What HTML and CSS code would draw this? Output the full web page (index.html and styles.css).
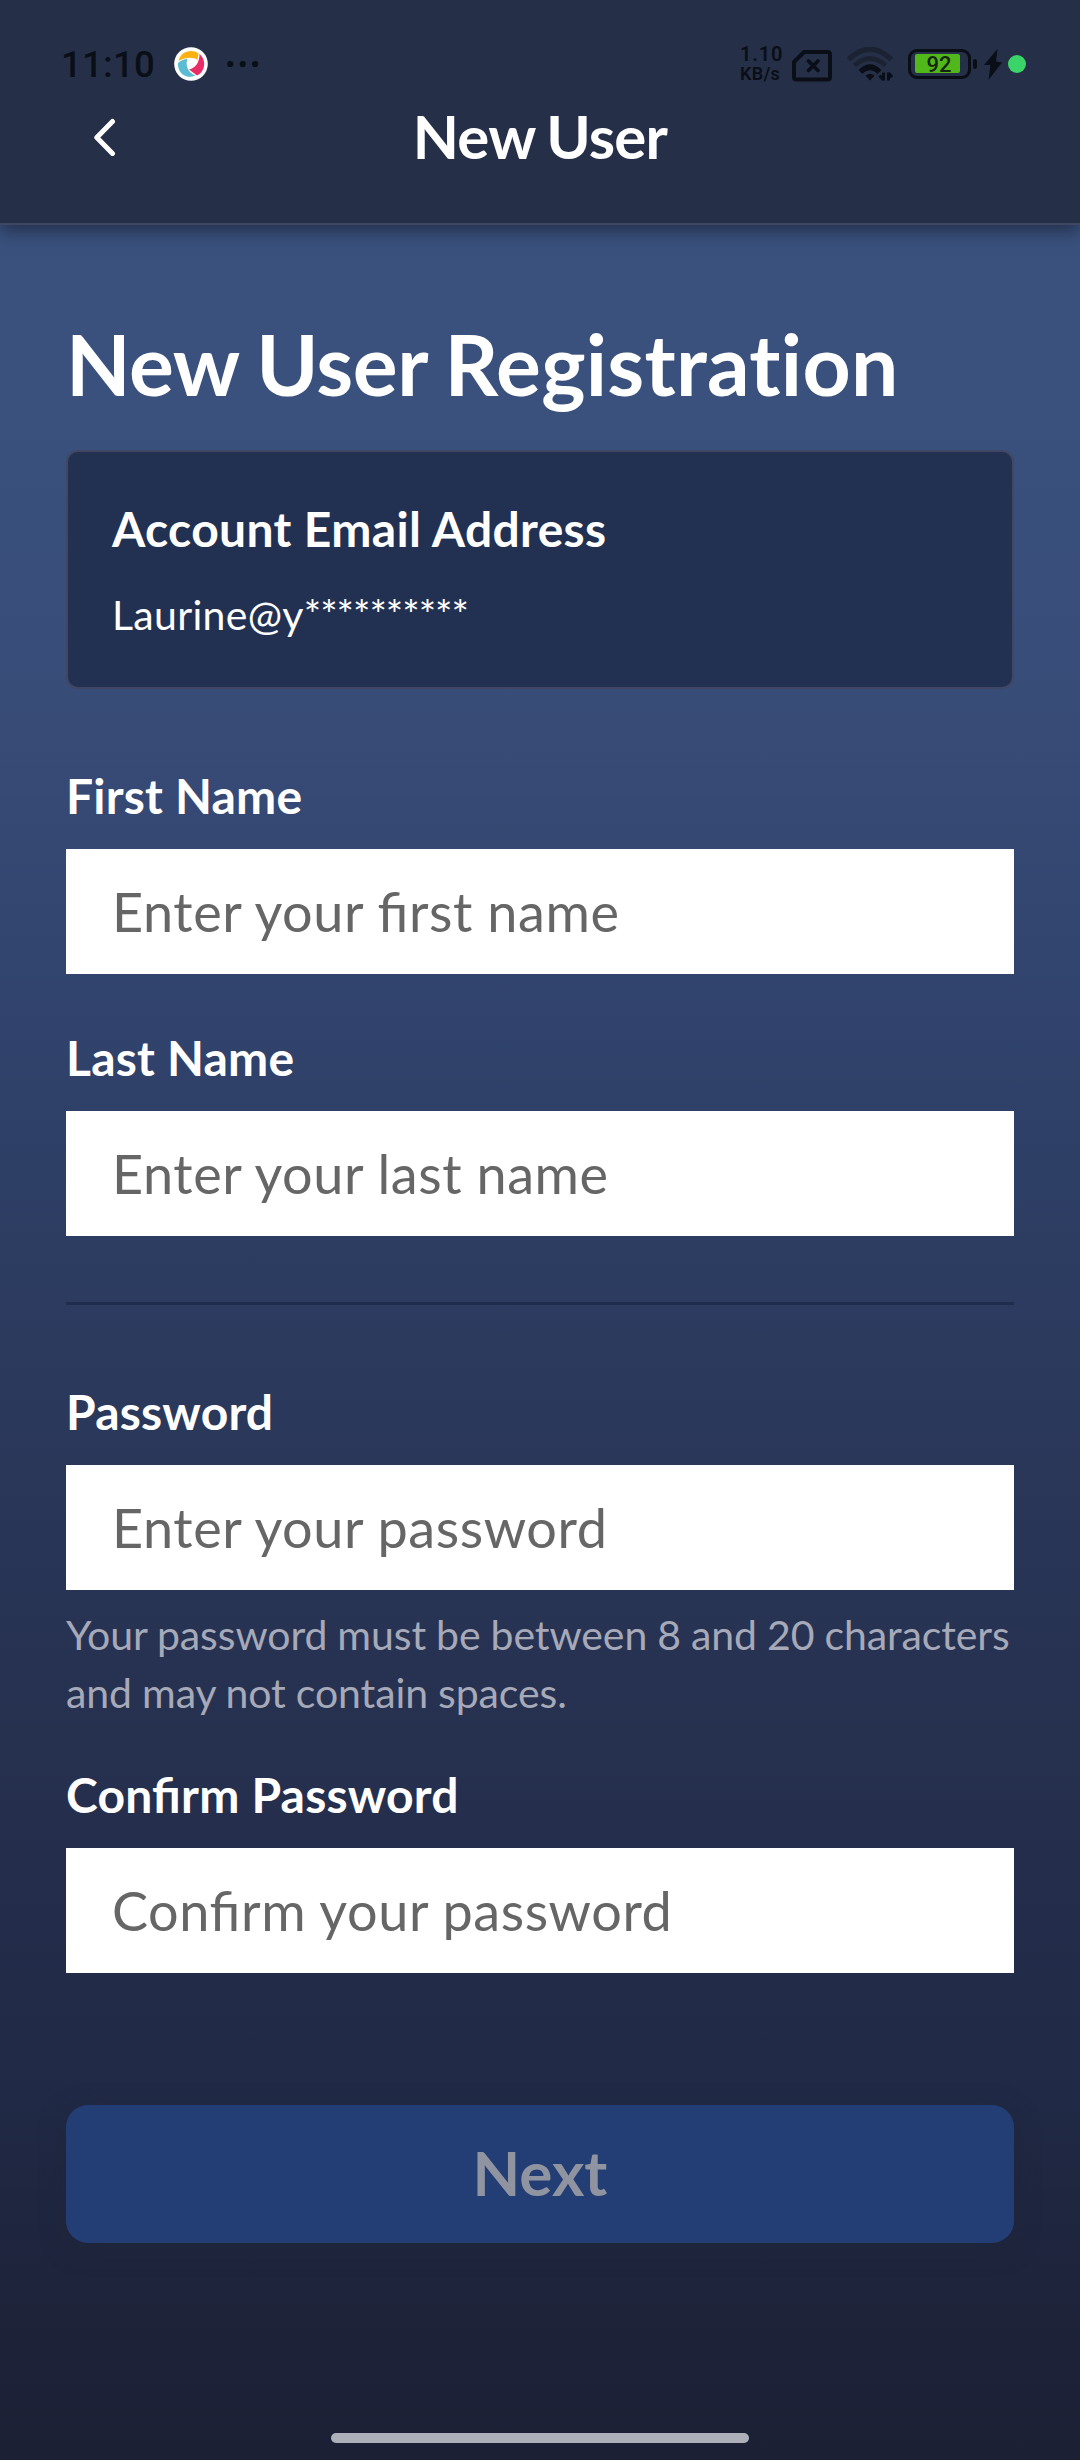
FILE: index.html
```html
<!DOCTYPE html>
<html lang="en">
<head>
<meta charset="utf-8">
<title>New User</title>
<link rel="stylesheet" href="styles.css">
</head>
<body>
<div class="screen">
  <header class="header">
    <div class="status">
      <span class="clock">11:10</span>
      <svg class="app-icon" width="34" height="34" viewBox="0 0 34 34">
        <circle cx="17" cy="17" r="16.8" fill="#fff"/>
        <path d="M4.500 14C6 7.500 11 4 17 4c3 0 5.500.8 7.500 2.500L23.500 13C20 10 12 9.500 4.500 14Z" fill="#fdb012"/>
        <path d="M25.500 7C30 10.500 31.500 17 29 22.500c-1.500 3-3.500 5-6 6L15 22.500C22 21 25.500 15 25.500 7Z" fill="#ea2c66"/>
        <path d="M4 16c3-2.500 6-3.800 9.500-4.200C11 18 14 26 21.500 28.500 15 31.500 8 29 5.500 23.500 4.300 21 3.800 18.500 4 16Z" fill="#5bbcd3"/>
      </svg>
      <svg class="dots" width="32" height="8" viewBox="0 0 32 8"><circle cx="3.300" cy="4" r="3.100"/><circle cx="15.700" cy="4" r="3.100"/><circle cx="28.100" cy="4" r="3.100"/></svg>
      <span class="speed"><span class="speed-value">1.10</span><span>KB/s</span></span>
      <svg class="sim" width="40" height="32" viewBox="0 0 40 32" fill="none" stroke="#0a0e16" stroke-linejoin="round">
        <path d="M12 2H35.500Q38 2 38 4.500V27Q38 29.500 35.500 29.500H4.500Q2 29.500 2 27V12Z" stroke-width="4"/>
        <path d="M16.500 11 26 20.500M26 11 16.500 20.500" stroke-width="3.600" stroke-linecap="round"/>
      </svg>
      <svg class="wifi" width="46" height="35" viewBox="0 0 46 35" fill="none">
        <path d="M1.500 12.500Q23-8 44.500 12.500" stroke="#1b2333" stroke-width="5"/>
        <path d="M7.500 18.500Q23 4.500 38.500 18.500" stroke="#1b2333" stroke-width="5"/>
        <path d="M13.500 25Q23 15.500 32.500 25" stroke="#0a0e16" stroke-width="5.500"/>
        <path d="M18.500 28.800Q23 24.500 27.500 28.800L23 33.500Z" fill="#0a0e16"/>
        <path d="M36.500 25.500v8M36.500 33l-4-4.500M41.500 33.500v-8M41.500 26l3.500 4" stroke="#0a0e16" stroke-width="3"/>
      </svg>
      <span class="battery"><span class="battery-level">92</span></span>
      <svg class="bolt" width="18" height="31" viewBox="0 0 18 31"><path d="M13.500 0 0 16h6.500L4.500 31 18 13.500l-6-1Z" fill="#0a0e16"/></svg>
      <span class="privacy"></span>
    </div>
    <div class="nav">
      <svg class="back" width="24" height="40" viewBox="0 0 24 40"><path d="M19.500 5.500 3.800 21.500 19.500 37.500" fill="none" stroke="#fff" stroke-width="5" stroke-linecap="round" stroke-linejoin="round"/></svg>
      <div class="nav-title">New User</div>
    </div>
  </header>
  <main class="form">
    <h1 class="title">New User <span class="title-wide">Registration</span></h1>
    <section class="card">
      <h2 class="card-title">Account Email Address</h2>
      <p class="card-text">Laurine@y<span class="mask">**********</span></p>
    </section>
    <label class="field">First Name<input class="input" placeholder="Enter your first name"></label>
    <label class="field">Last Name<input class="input" placeholder="Enter your last name"></label>
    <hr class="divider">
    <label class="field">Password<input class="input" type="password" placeholder="Enter your password"></label>
    <p class="hint">Your password must be between 8 and 20 characters and may not contain spaces.</p>
    <label class="field">Confirm Password<input class="input" type="password" placeholder="Confirm your password"></label>
    <button class="next" disabled>Next</button>
  </main>
  <div class="home-bar"></div>
</div>
</body>
</html>
```

FILE: styles.css
```css
* { box-sizing: border-box; margin: 0; padding: 0; }
body { font-family: Lato, sans-serif; color: #fff; background: #1b2035; }
.screen {
  display: flex;
  flex-direction: column;
  width: 1080px;
  height: 2460px;
  background: linear-gradient(180deg, #3a517d 0, #3a517d 400px, #384c78 700px, #2f4169 1100px, #2c3b5f 1300px, #26304f 1750px, #202945 2100px, #1d2238 2350px, #1b2035 2460px);
}
.header {
  height: 225px;
  background: #252f47;
  border-bottom: 2px solid #414762;
  box-shadow: 0 6px 16px rgba(20, 26, 44, .6);
}
.status {
  display: flex;
  align-items: center;
  height: 94px;
  padding: 34px 54px 0 61px;
  font-family: Roboto, sans-serif;
  color: #0a0e16;
}
.clock { width: 113px; font-size: 36.500px; font-weight: 500; letter-spacing: .3px; }
.app-icon { margin-right: 19px; }
.dots { fill: #0a0e16; }
.speed {
  display: flex;
  flex-direction: column;
  width: 52px;
  margin-left: auto;
  font-size: 18px;
  font-weight: 600;
  line-height: 19px;
  letter-spacing: .3px;
}
.speed-value { font-size: 20px; letter-spacing: .8px; }
.sim { margin-top: 3px; }
.wifi { margin-left: 15px; }
.battery {
  position: relative;
  width: 63px;
  height: 30px;
  margin-left: 15px;
  padding: 2px 4px;
  border: 3px solid #0a0e16;
  border-radius: 9px;
}
.battery::after {
  content: "";
  position: absolute;
  right: -9px;
  top: 7px;
  width: 4px;
  height: 10px;
  border-radius: 2px;
  background: #0a0e16;
}
.battery-level {
  display: block;
  width: 45px;
  height: 19px;
  border-radius: 2px;
  padding-left: 3px;
  background: #51b71a;
  color: #14260e;
  font-size: 22px;
  font-weight: 500;
  line-height: 22px;
  text-align: center;
}
.bolt { margin-left: 13px; }
.privacy { width: 18px; height: 18px; margin-left: 6px; border-radius: 50%; background: #3bd469; }
.nav {
  display: grid;
  grid-template-columns: 120px 1fr 120px;
  align-items: center;
  height: 84px;
}
.back { justify-self: end; margin-right: 3px; }
.nav-title {
  font-size: 60px;
  font-weight: 700;
  line-height: 72px;
  letter-spacing: -.8px;
  word-spacing: -1.800px;
  text-align: center;
}
.form { display: flex; flex-direction: column; padding: 88px 66px 0; }
.title {
  font-size: 84px;
  font-weight: 700;
  line-height: 102px;
  letter-spacing: -.5px;
  word-spacing: -1.500px;
  font-variant-ligatures: none;
}
.title-wide { letter-spacing: .25px; }
.card {
  height: 239px;
  margin: 35px 0 78px;
  padding: 48px 44px;
  border: 2px solid #414762;
  border-radius: 12px;
  background: #223152;
}
.card-title { font-size: 48px; font-weight: 700; line-height: 58px; letter-spacing: .35px; }
.card-text { margin-top: 32px; font-size: 41px; line-height: 50px; letter-spacing: .3px; }
.mask { letter-spacing: -1px; }
.field {
  display: block;
  font-size: 48px;
  font-weight: 700;
  line-height: 58px;
  letter-spacing: .2px;
  font-feature-settings: "liga" 1;
}
.field + .field { margin-top: 55px; }
.input {
  display: block;
  width: 100%;
  height: 125px;
  margin-top: 24px;
  padding: 0 46px;
  border: 0;
  border-radius: 0;
  background: #fff;
  font: 400 54px Lato, sans-serif;
  letter-spacing: .58px;
  font-feature-settings: "liga" 1;
}
.input::placeholder { color: #666; opacity: 1; }
.divider { height: 3px; margin: 66px 0 78px; border: 0; background: #1f2c4c; }
.hint {
  margin: 16px 0 44px;
  color: #a6a9b8;
  font-size: 41px;
  line-height: 58px;
  letter-spacing: -.1px;
  word-spacing: -.3px;
}
.next {
  height: 138px;
  margin-top: 132px;
  padding-bottom: 4px;
  border: 0;
  border-radius: 22px;
  background: #233e74;
  box-shadow: 0 6px 24px rgba(32, 38, 56, .6);
  color: #9093a0;
  font: 700 62px Lato, sans-serif;
}
.home-bar { width: 418px; height: 10px; margin: auto auto 17px; border-radius: 5px; background: #adb0b8; }
```
